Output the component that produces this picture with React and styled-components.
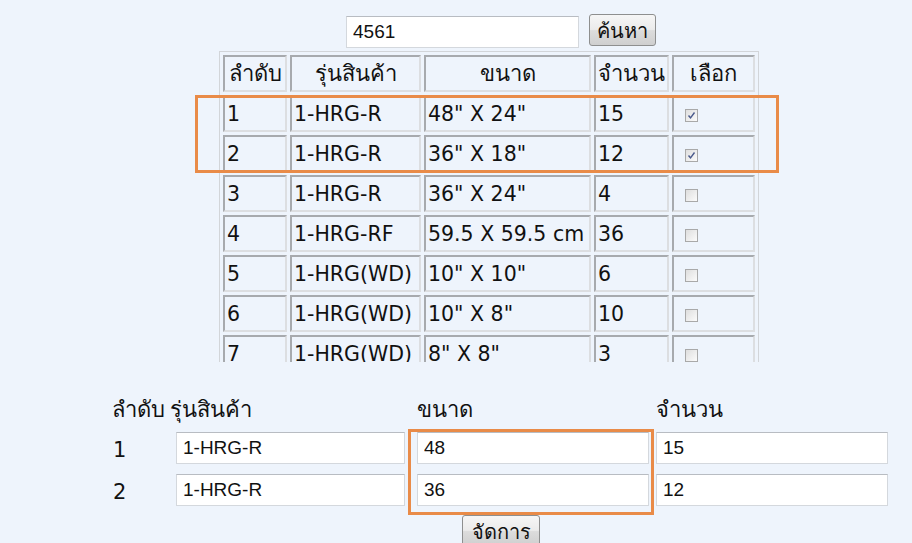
import React from "react";
import styled, { createGlobalStyle } from "styled-components";

const GlobalStyle = createGlobalStyle`
  body {
    margin: 0;
    background: #eef4fc;
    font-family: "DejaVu Sans", Tahoma, sans-serif;
    color: #111;
  }
`;

const Page = styled.div`
  position: relative;
  width: 912px;
  height: 543px;
  overflow: hidden;
  background: #eef4fc;
`;

const SearchRow = styled.div`
  display: flex;
  justify-content: center;
  align-items: flex-start;
  gap: 10px;
  padding: 14px 0 0 90px;
  height: 37px;
`;

const TextBox = styled.input`
  box-sizing: border-box;
  width: ${(p) => p.$w || 233}px;
  height: 32px;
  margin-top: ${(p) => p.$top || 0}px;
  margin-left: ${(p) => p.$left || 0}px;
  padding: 0 6px;
  border: 1px solid #d4d8dd;
  border-top-color: #b8bcc2;
  background: #fff;
  font-family: "Liberation Sans", Arial, sans-serif;
  font-size: 19px;
  color: #111;
  outline: none;
`;

const OldButton = styled.button`
  box-sizing: border-box;
  width: ${(p) => p.$w}px;
  height: 32px;
  padding: 0 0 2px;
  border: 1px solid #8e8f8f;
  border-radius: 3px;
  background: linear-gradient(#f6f6f6 0%, #ebebeb 48%, #dcdcdc 52%, #cfcfcf 100%);
  font-family: "DejaVu Sans", Tahoma, sans-serif;
  font-size: 20px;
  color: #111;
`;

const TableScroll = styled.div`
  margin-left: 219px;
  width: 541px;
  height: 311px;
  overflow: hidden;
`;

const Grid = styled.table`
  border-collapse: separate;
  border-spacing: 3px;
  border: 1px solid #d2d5d9;
  font-size: 20.5px;
  table-layout: fixed;
`;

const Cell = styled.td`
  box-sizing: border-box;
  width: ${(p) => p.$w}px;
  height: 37px;
  padding: 0 2px;
  line-height: 30px;
  border: 2px solid #dcdee1;
  border-top-color: #a7aaae;
  border-left-color: #a7aaae;
  text-align: ${(p) => (p.$head ? "center" : "left")};
  font-size: ${(p) => (p.$head ? "22px" : "inherit")};
  white-space: nowrap;
  overflow: hidden;
  vertical-align: middle;
`;

const Box = styled.span`
  display: inline-block;
  width: 11px;
  height: 11px;
  margin-left: 9px;
  margin-top: 2px;
  border: 1px solid #a9a9a9;
  background: linear-gradient(135deg, #dedede, #fbfbfb);
  vertical-align: middle;
  position: relative;
`;

const Form = styled.div`
  display: grid;
  grid-template-columns: 58px 247px 239px 233px;
  row-gap: 10px;
  margin: 33px 0 0 112px;
  font-size: 21px;
`;

const Label = styled.div`
  height: 30px;
  line-height: 30px;
  margin-bottom: -3px;
  white-space: nowrap;
  font-size: 22px;
`;

const RowNum = styled.div`
  height: 32px;
  line-height: 36px;
  padding-left: 1px;
`;

const SubmitRow = styled.div`
  display: flex;
  justify-content: center;
  padding: 9px 0 0 90px;
`;

const Mark = styled.div`
  position: absolute;
  left: ${(p) => p.$x}px;
  top: ${(p) => p.$y}px;
  width: ${(p) => p.$w}px;
  height: ${(p) => p.$h}px;
  box-sizing: border-box;
  border: 3px solid #e98b48;
  pointer-events: none;
`;

const items = [
  { n: 1, model: "1-HRG-R", size: '48" X 24"', qty: 15, on: true },
  { n: 2, model: "1-HRG-R", size: '36" X 18"', qty: 12, on: true },
  { n: 3, model: "1-HRG-R", size: '36" X 24"', qty: 4 },
  { n: 4, model: "1-HRG-RF", size: "59.5 X 59.5 cm", qty: 36 },
  { n: 5, model: "1-HRG(WD)", size: '10" X 10"', qty: 6 },
  { n: 6, model: "1-HRG(WD)", size: '10" X 8"', qty: 10 },
  { n: 7, model: "1-HRG(WD)", size: '8" X 8"', qty: 3 },
];

const picked = [
  { n: 1, model: "1-HRG-R", size: "48", qty: "15" },
  { n: 2, model: "1-HRG-R", size: "36", qty: "12" },
];

const widths = [64, 131, 167, 75, 83];

function Check({ on }) {
  return (
    <Box>
      {on && (
        <svg width="11" height="11" viewBox="0 0 11 11" style={{ position: "absolute", left: 0, top: 0 }}>
          <path d="M2.5 5.5 L4.5 7.8 L8.5 2.5" fill="none" stroke="#4a5a8c" strokeWidth="1.4" />
        </svg>
      )}
    </Box>
  );
}

export default function App() {
  return (
    <Page>
      <GlobalStyle />
      <SearchRow>
        <TextBox $top={2} defaultValue="4561" />
        <OldButton $w={67}>ค้นหา</OldButton>
      </SearchRow>

      <TableScroll>
        <Grid>
          <colgroup>
            {widths.map((w, i) => (
              <col key={i} style={{ width: w }} />
            ))}
          </colgroup>
          <tbody>
            <tr>
              {["ลำดับ", "รุ่นสินค้า", "ขนาด", "จำนวน", "เลือก"].map((h, i) => (
                <Cell key={h} $w={widths[i]} $head>
                  {h}
                </Cell>
              ))}
            </tr>
            {items.map((it) => (
              <tr key={it.n}>
                <Cell $w={widths[0]}>{it.n}</Cell>
                <Cell $w={widths[1]}>{it.model}</Cell>
                <Cell $w={widths[2]}>{it.size}</Cell>
                <Cell $w={widths[3]}>{it.qty}</Cell>
                <Cell $w={widths[4]}>
                  <Check on={it.on} />
                </Cell>
              </tr>
            ))}
          </tbody>
        </Grid>
      </TableScroll>

      <Form>
        <Label>ลำดับ</Label>
        <Label>รุ่นสินค้า</Label>
        <Label>ขนาด</Label>
        <Label>จำนวน</Label>
        {picked.map((p) => (
          <React.Fragment key={p.n}>
            <RowNum>{p.n}</RowNum>
            <TextBox $w={229} $left={6} defaultValue={p.model} />
            <TextBox $w={232} defaultValue={p.size} />
            <TextBox $w={232} defaultValue={p.qty} />
          </React.Fragment>
        ))}
      </Form>

      <SubmitRow>
        <OldButton $w={78}>จัดการ</OldButton>
      </SubmitRow>

      <Mark $x={195} $y={95} $w={584} $h={78} />
      <Mark $x={408} $y={429} $w={246} $h={86} />
    </Page>
  );
}
